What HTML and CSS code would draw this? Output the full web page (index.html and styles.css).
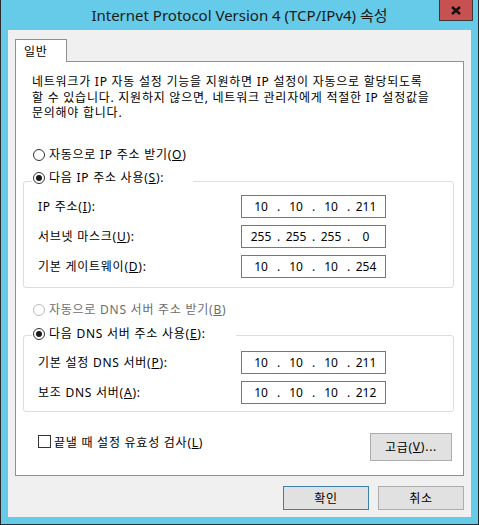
FILE: index.html
```html
<!DOCTYPE html>
<html lang="ko">
<head>
<meta charset="utf-8">
<title>Internet Protocol Version 4 (TCP/IPv4) 속성</title>
<link rel="stylesheet" href="styles.css">
</head>
<body>
<div class="window">
  <div class="titlebar">
    <div class="title-spacer"></div>
    <div class="title">Internet Protocol Version 4 (TCP/IPv4) 속성</div>
    <div class="title-controls">
      <div class="close">
        <svg width="10" height="9" viewBox="0 0 10 9"><path d="M1 1 L9 8 M9 1 L1 8" stroke="#111" stroke-width="2.4" fill="none"/></svg>
      </div>
    </div>
  </div>
  <div class="client">
    <div class="tabs"><div class="tab">일반</div></div>
    <div class="panel">
      <p class="desc">네트워크가 IP 자동 설정 기능을 지원하면 IP 설정이 자동으로 할당되도록<br>할 수 있습니다. 지원하지 않으면, 네트워크 관리자에게 적절한 IP 설정값을<br>문의해야 합니다.</p>

      <div class="radio-row r-auto-ip"><span class="radio"></span><span>자동으로 IP 주소 받기(<u>O</u>)</span></div>
      <div class="legend legend-ip"><span class="radio checked"></span><span>다음 IP 주소 사용(<u>S</u>):</span></div>
      <div class="group group-ip">
        <div class="field"><span class="label">IP 주소(<u>I</u>):</span>
          <div class="ipbox"><span class="oct">10</span><span class="dot">.</span><span class="oct">10</span><span class="dot">.</span><span class="oct">10</span><span class="dot">.</span><span class="oct">211</span></div></div>
        <div class="field"><span class="label">서브넷 마스크(<u>U</u>):</span>
          <div class="ipbox"><span class="oct">255</span><span class="dot">.</span><span class="oct">255</span><span class="dot">.</span><span class="oct">255</span><span class="dot">.</span><span class="oct">0</span></div></div>
        <div class="field"><span class="label">기본 게이트웨이(<u>D</u>):</span>
          <div class="ipbox"><span class="oct">10</span><span class="dot">.</span><span class="oct">10</span><span class="dot">.</span><span class="oct">10</span><span class="dot">.</span><span class="oct">254</span></div></div>
      </div>

      <div class="radio-row disabled r-auto-dns"><span class="radio"></span><span>자동으로 DNS 서버 주소 받기(<u>B</u>)</span></div>
      <div class="legend legend-dns"><span class="radio checked"></span><span>다음 DNS 서버 주소 사용(<u>E</u>):</span></div>
      <div class="group group-dns">
        <div class="field"><span class="label">기본 설정 DNS 서버(<u>P</u>):</span>
          <div class="ipbox"><span class="oct">10</span><span class="dot">.</span><span class="oct">10</span><span class="dot">.</span><span class="oct">10</span><span class="dot">.</span><span class="oct">211</span></div></div>
        <div class="field"><span class="label">보조 DNS 서버(<u>A</u>):</span>
          <div class="ipbox"><span class="oct">10</span><span class="dot">.</span><span class="oct">10</span><span class="dot">.</span><span class="oct">10</span><span class="dot">.</span><span class="oct">212</span></div></div>
      </div>

      <div class="bottom-row">
        <div class="check-row"><span class="checkbox"></span><span>끝낼 때 설정 유효성 검사(<u>L</u>)</span></div>
        <div class="btn btn-adv">고급(<u>V</u>)...</div>
      </div>
    </div>
    <div class="buttons">
      <div class="btn btn-dlg default">확인</div>
      <div class="btn btn-dlg">취소</div>
    </div>
  </div>
</div>
</body>
</html>
```

FILE: styles.css
```css
* { box-sizing: border-box; }
html, body { margin: 0; padding: 0; background: #65cbe8; }
body {
  font-family: "Noto Sans", "Noto Sans CJK KR", sans-serif;
  font-size: 12px;
  color: #000;
}
u { text-decoration: underline; text-underline-offset: 1px; }

.window {
  width: 479px;
  height: 525px;
  background: #65cbe8;
  border: 1px solid #2b2b2b;
  border-top: none;
  display: flex;
  flex-direction: column;
}

.titlebar {
  height: 30px;
  display: grid;
  grid-template-columns: 1fr auto 1fr;
  align-items: center;
}
.title {
  font-family: "Noto Sans", "Noto Sans CJK KR", sans-serif;
  font-size: 15px;
  color: #1a1a1a;
  white-space: nowrap;
  line-height: 30px;
}
.title-controls {
  align-self: start;
  display: flex;
  justify-content: flex-end;
  padding-right: 5px;
}
.close {
  width: 34px;
  height: 21px;
  background: #c75050;
  border: 1px solid #3a3a3a;
  border-top: none;
  display: flex;
  align-items: center;
  justify-content: center;
}

.client {
  flex: 1;
  margin: 0 7px 7px 7px;
  background: #f0f0f0;
  display: flex;
  flex-direction: column;
  letter-spacing: 0.75px;
}

.tabs {
  padding: 9px 0 0 7px;
  display: flex;
}
.tab {
  width: 52px;
  height: 23px;
  background: #fff;
  border: 1px solid #8e9096;
  border-bottom: none;
  margin-bottom: -1px;
  position: relative;
  z-index: 1;
  padding: 3px 0 0 8px;
  line-height: 18px;
}

.panel {
  margin: 0 7px;
  height: 415px;
  background: #fff;
  border: 1px solid #8e9096;
  display: flex;
  flex-direction: column;
}

.desc {
  margin: 12px 0 0 16px;
  line-height: 15.5px;
  white-space: nowrap;
}

.radio-row, .legend {
  display: flex;
  align-items: center;
  height: 16px;
  line-height: 16px;
  gap: 4px;
  white-space: nowrap;
}
.radio {
  width: 12px;
  height: 12px;
  border: 1px solid #333;
  border-radius: 50%;
  background: #fff;
  flex: none;
  display: flex;
  align-items: center;
  justify-content: center;
}
.radio.checked::after {
  content: "";
  width: 6px;
  height: 6px;
  border-radius: 50%;
  background: #1a1a1a;
}
.radio-row { margin-left: 17px; }
.radio-row.disabled { color: #6d6d6d; }
.radio-row.disabled .radio { border-color: #bcbcbc; }

.r-auto-ip { margin-top: 26px; }

.legend {
  margin-left: 16px;
  padding-left: 1px;
  background: #fff;
  position: relative;
  z-index: 1;
}
.legend-ip { width: 161px; margin-top: 7px; margin-bottom: -5px; }
.legend-dns { width: 204px; margin-top: 8px; margin-bottom: -7px; }

.group {
  margin-left: 7px;
  width: 431px;
  border: 1px solid #d5dfe5;
  border-radius: 3px;
  display: flex;
  flex-direction: column;
  gap: 7px;
  padding-left: 14px;
}
.group-ip { padding-top: 13px; padding-bottom: 9px; }
.group-dns { padding-top: 15px; padding-bottom: 7px; }

.r-auto-dns { margin-top: 14px; }

.field {
  display: flex;
  align-items: center;
  height: 23px;
}
.label {
  width: 203px;
  white-space: nowrap;
}
.ipbox {
  width: 145px;
  height: 23px;
  border: 1px solid #777;
  display: flex;
  align-items: center;
  padding-left: 5px;
  font-family: "Noto Sans", sans-serif;
  letter-spacing: 0;
}
.oct { width: 28px; text-align: center; }
.dot { width: 7px; text-align: center; }

.bottom-row {
  display: flex;
  align-items: flex-start;
  justify-content: space-between;
  margin: 21px 11px 0 22px;
}
.check-row {
  display: flex;
  align-items: center;
  gap: 3px;
  height: 16px;
  margin-top: 1px;
  white-space: nowrap;
}
.checkbox {
  width: 13px;
  height: 13px;
  border: 1px solid #333;
  background: #fff;
}

.btn {
  background: #e1e1e1;
  border: 1px solid #adadad;
  display: flex;
  align-items: center;
  justify-content: center;
  white-space: nowrap;
}
.btn-adv { width: 82px; height: 28px; }

.buttons {
  display: flex;
  justify-content: flex-end;
  gap: 9px;
  padding: 10px 7px 0 0;
}
.btn-dlg { width: 86px; height: 24px; }
.btn-dlg.default { border-color: #3c7fb1; }
```
